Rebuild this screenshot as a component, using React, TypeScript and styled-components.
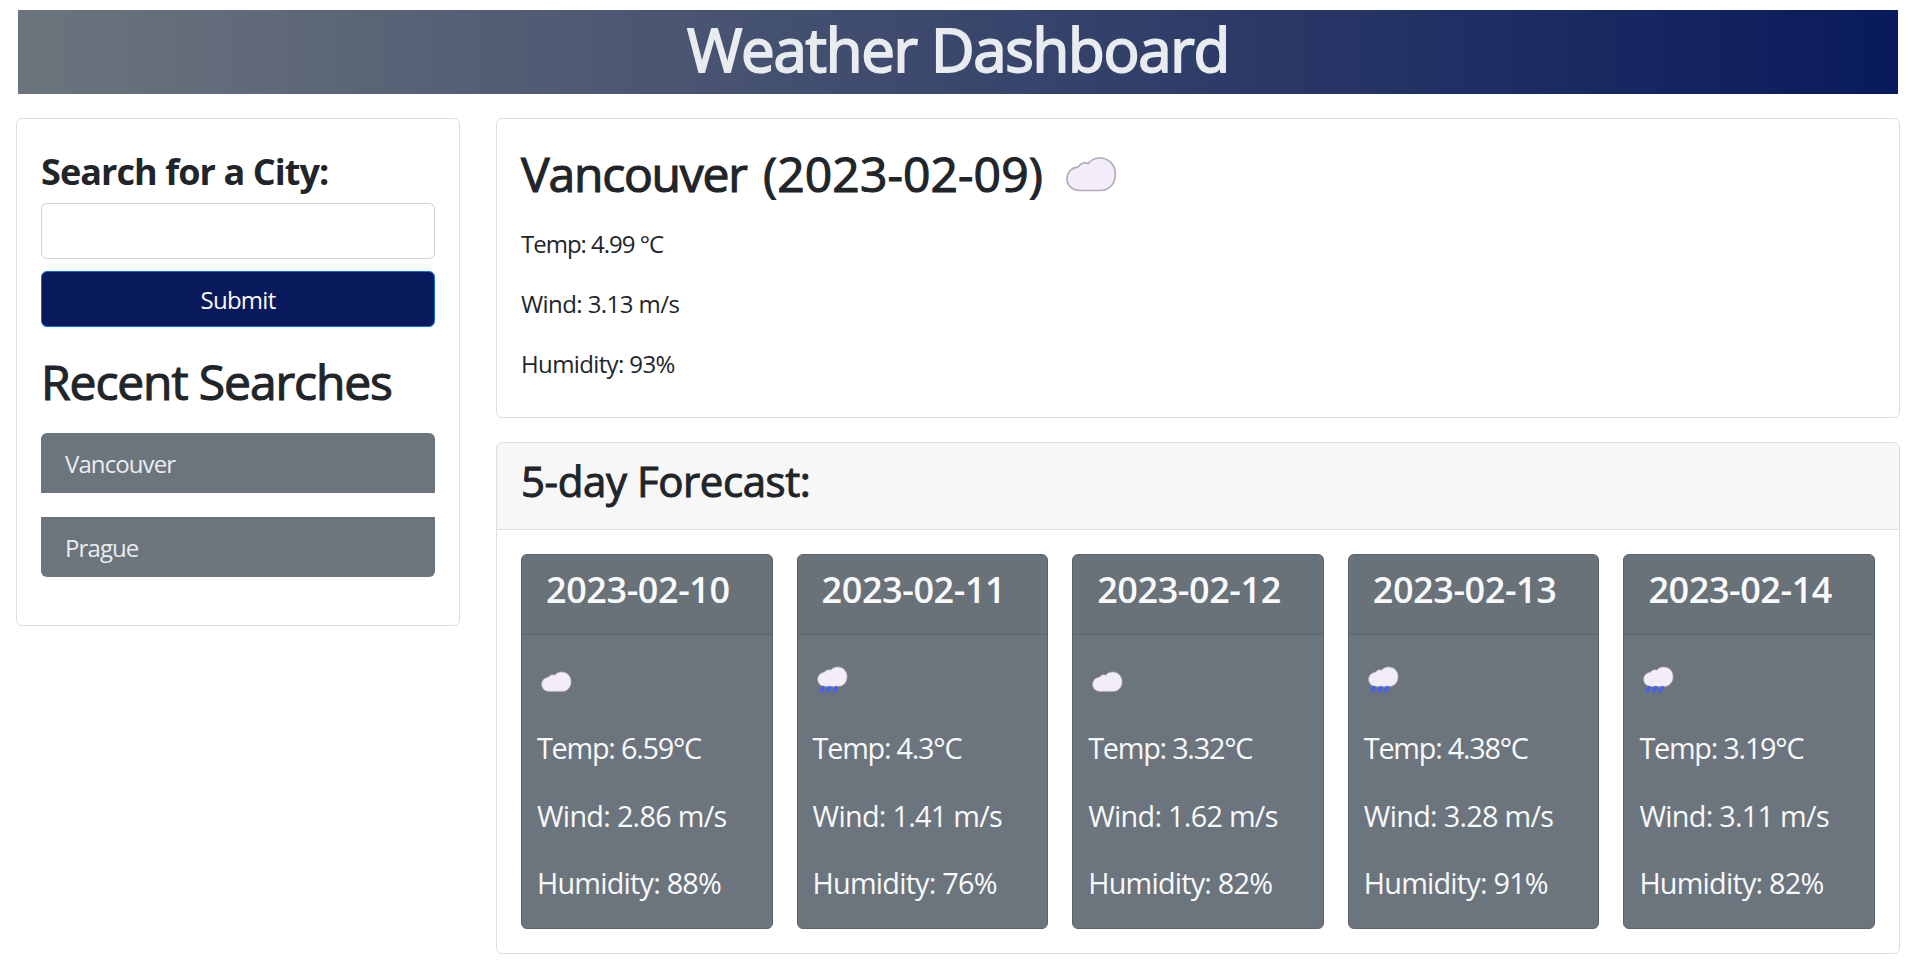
import React from 'react';
import styled, { createGlobalStyle } from 'styled-components';

const GlobalStyle = createGlobalStyle`
  *, *::before, *::after { box-sizing: border-box; }
  body {
    margin: 0;
    background: #fff;
    color: #212529;
    font-family: "Open Sans", "Noto Sans", sans-serif;
    font-size: 24px;
    line-height: 36px;
  }
  h1, h2, h3, h4, p, ul { margin: 0; padding: 0; font-weight: 400; }
`;

const Page = styled.div`
  padding: 10px 15px 12px 16px;
`;

const Banner = styled.header`
  height: 84px;
  margin: 0 2px 24px;
  padding-top: 3px;
  background: linear-gradient(to right, #6c757d, #091a5c);
  text-align: center;
`;

const Title = styled.h1`
  font-size: 60px;
  line-height: 72px;
  letter-spacing: -1.3px;
  -webkit-text-stroke: 1.8px currentColor;
  color: #e9ecef;
`;

const Columns = styled.main`
  display: grid;
  grid-template-columns: 444px 1fr;
  gap: 36px;
  align-items: start;
`;

const Results = styled.div`
  display: flex;
  flex-direction: column;
  gap: 24px;
`;

const Card = styled.section`
  border: 1px solid #dfdfdf;
  border-radius: 6px;
  background: #fff;
`;

const SearchCard = styled(Card)`
  height: 508px;
  padding: 24px;
`;

const SearchForm = styled.form`
  display: flex;
  flex-direction: column;
`;

const SearchLabel = styled.label`
  padding-top: 2px;
  margin-bottom: 4px;
  font-size: 36px;
  font-weight: 700;
  line-height: 54px;
  letter-spacing: -0.93px;
`;

const SearchInput = styled.input`
  height: 56px;
  padding: 9px 18px;
  margin-bottom: 12px;
  border: 1px solid #ced4da;
  border-radius: 6px;
  font: inherit;
  outline: none;
`;

const SubmitButton = styled.button`
  height: 56px;
  padding: 2px 0 0 0;
  border: 1px solid #0d6efd;
  border-radius: 6px;
  background: #091a5c;
  color: #f8f9fa;
  font: inherit;
  letter-spacing: -0.75px;
`;

const RecentTitle = styled.h2`
  padding-top: 26px;
  margin-bottom: 22px;
  font-size: 48px;
  line-height: 58px;
  letter-spacing: -1.1px;
  -webkit-text-stroke: 1.1px currentColor;
`;

const RecentList = styled.ul`
  display: flex;
  flex-direction: column;
  gap: 24px;
  list-style: none;
`;

const RecentItem = styled.li`
  height: 60px;
  padding: 13px 24px 0;
  background: #6c757d;
  color: #e9ecef;
  letter-spacing: -0.9px;

  &:first-child { border-radius: 6px 6px 0 0; }
  &:last-child { border-radius: 0 0 6px 6px; }
`;

const CurrentCard = styled(Card)`
  height: 300px;
  padding: 24px;
`;

const CurrentHeading = styled.h2`
  display: flex;
  align-items: flex-start;
  height: 83px;
  padding-top: 2px;
  font-size: 48px;
  line-height: 58px;
  white-space: nowrap;
  -webkit-text-stroke: 1.1px currentColor;
`;

const CityName = styled.span`
  width: 242px;
  letter-spacing: -1.2px;
`;

const CurrentDate = styled.span`
  width: 303px;
  letter-spacing: 0.1px;
`;

const CloudIcon = styled.svg`
  margin-top: 12px;
`;

const Reading = styled.p<{ $track: number }>`
  letter-spacing: ${({ $track }) => $track}em;
  white-space: nowrap;

  & + & { margin-top: 24px; }
`;

const ForecastHeader = styled.div`
  height: 87px;
  padding: 12px 24px 0;
  border-bottom: 1px solid #dfdfdf;
  border-radius: 5px 5px 0 0;
  background: #f7f7f7;
`;

const ForecastTitle = styled.h3`
  font-size: 42px;
  line-height: 51px;
  letter-spacing: -0.42px;
  -webkit-text-stroke: 1px currentColor;
`;

const Days = styled.div`
  display: grid;
  grid-template-columns: repeat(5, 1fr);
  gap: 24px;
  padding: 24px;
`;

const DayCard = styled.article`
  height: 375px;
  border: 1px solid #5c646b;
  border-radius: 6px;
  background: #6c757d;
  color: #f8f9fa;
  overflow: hidden;
`;

const DayHeader = styled.div`
  height: 80px;
  padding: 13px 24px 0;
  border-bottom: 1px solid #5c646b;
  background: #697179;
`;

const DayDate = styled.h4`
  font-weight: 600;
  font-size: 36px;
  line-height: 44px;
  letter-spacing: -0.42px;
  white-space: nowrap;
`;

const DayBody = styled.div`
  padding: 0 15px;
  font-size: 28.8px;
  line-height: 43.2px;
`;

const DayIcon = styled.div<{ $rain: boolean }>`
  height: 91.3px;
  padding: ${({ $rain }) => ($rain ? 31 : 36)}px 0 0 4px;
  line-height: 0;
`;

const CLOUD =
  'M13.5 33.5 C6 33.5 1 28 1 21.8 C1 15.5 5.5 10.6 12.2 9.8 C15 6 18.5 5 22.2 6.4 C25.5 2.6 29.5 1 33.6 1 C43 1 49.3 8 49.3 17 C49.3 26.5 43.5 33.5 35 33.5 Z';

function LargeCloud() {
  return (
    <CloudIcon width="51" height="35" viewBox="0 0 51 35">
      <path d={CLOUD} fill="#f2edf8" stroke="#b3acba" strokeWidth="1.7" />
    </CloudIcon>
  );
}

function SmallCloud({ rain }: { rain: boolean }) {
  return (
    <svg width="31" height="28" viewBox="0 0 31 28">
      <path
        d={CLOUD}
        transform="translate(0 0.3) scale(0.61 0.6)"
        fill="#f2edf8"
        stroke="#b3acba"
        strokeWidth="1.1"
      />
      {rain && (
        <path
          d="M6.2 21.6 L4 24.9 M12.8 21.6 L10.6 24.9 M19.4 21.6 L17.2 24.9"
          stroke="#4360fb"
          strokeWidth="3.4"
          strokeLinecap="round"
          fill="none"
        />
      )}
    </svg>
  );
}

interface Day {
  date: string;
  rain: boolean;
  temp: string;
  wind: string;
  humidity: string;
}

const recent = ['Vancouver', 'Prague'];

const days: Day[] = [
  { date: '2023-02-10', rain: false, temp: '6.59', wind: '2.86', humidity: '88' },
  { date: '2023-02-11', rain: true, temp: '4.3', wind: '1.41', humidity: '76' },
  { date: '2023-02-12', rain: false, temp: '3.32', wind: '1.62', humidity: '82' },
  { date: '2023-02-13', rain: true, temp: '4.38', wind: '3.28', humidity: '91' },
  { date: '2023-02-14', rain: true, temp: '3.19', wind: '3.11', humidity: '82' },
];

export default function App() {
  return (
    <Page>
      <GlobalStyle />
      <Banner>
        <Title>Weather Dashboard</Title>
      </Banner>
      <Columns>
        <SearchCard>
          <SearchForm>
            <SearchLabel htmlFor="city">Search for a City:</SearchLabel>
            <SearchInput id="city" type="text" />
            <SubmitButton type="button">Submit</SubmitButton>
          </SearchForm>
          <RecentTitle>Recent Searches</RecentTitle>
          <RecentList>
            {recent.map((city) => (
              <RecentItem key={city}>{city}</RecentItem>
            ))}
          </RecentList>
        </SearchCard>
        <Results>
          <CurrentCard>
            <CurrentHeading>
              <CityName>Vancouver </CityName>
              <CurrentDate>(2023-02-09)</CurrentDate>
              <LargeCloud />
            </CurrentHeading>
            <Reading $track={-0.042}>Temp: 4.99 °C</Reading>
            <Reading $track={-0.024}>Wind: 3.13 m/s</Reading>
            <Reading $track={-0.026}>Humidity: 93%</Reading>
          </CurrentCard>
          <Card>
            <ForecastHeader>
              <ForecastTitle>5-day Forecast:</ForecastTitle>
            </ForecastHeader>
            <Days>
              {days.map((day) => (
                <DayCard key={day.date}>
                  <DayHeader>
                    <DayDate>{day.date}</DayDate>
                  </DayHeader>
                  <DayBody>
                    <DayIcon $rain={day.rain}>
                      <SmallCloud rain={day.rain} />
                    </DayIcon>
                    <Reading $track={-0.043}>Temp: {day.temp}°C</Reading>
                    <Reading $track={-0.025}>Wind: {day.wind} m/s</Reading>
                    <Reading $track={-0.027}>Humidity: {day.humidity}%</Reading>
                  </DayBody>
                </DayCard>
              ))}
            </Days>
          </Card>
        </Results>
      </Columns>
    </Page>
  );
}
